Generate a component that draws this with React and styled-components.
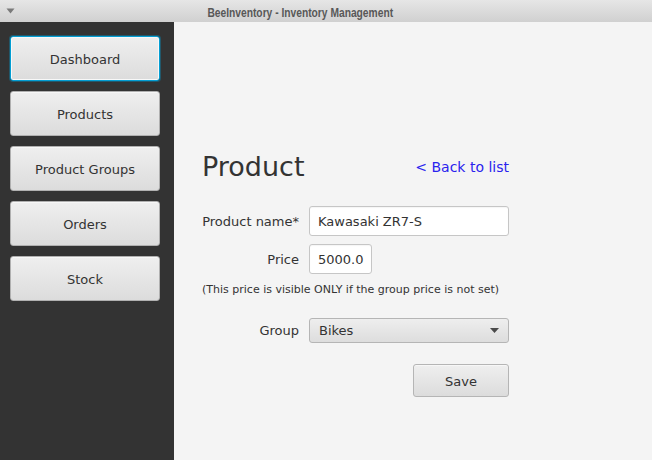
import React from 'react';
import styled, { createGlobalStyle } from 'styled-components';

const GlobalStyle = createGlobalStyle`
  html, body {
    margin: 0;
    padding: 0;
    background: #f4f4f4;
  }
  body {
    font-family: "DejaVu Sans", Verdana, sans-serif;
    color: #333;
  }
`;

const Window = styled.div`
  width: 652px;
  height: 460px;
  display: flex;
  flex-direction: column;
  overflow: hidden;
`;

const TitleBar = styled.div`
  height: 22px;
  flex: none;
  display: flex;
  align-items: center;
  padding: 0 66px 0 6px;
  background: linear-gradient(#e6e6e6, #d0d0d0);
  box-sizing: border-box;
`;

const MenuArrow = styled.svg`
  width: 9px;
  height: 6px;
  flex: none;
`;

const TitleSlot = styled.div`
  flex: 1;
  text-align: center;
`;

// the window manager font is a narrow bold face, squeeze a regular one to match
const WindowTitle = styled.span`
  display: inline-block;
  font-family: "Liberation Sans Narrow", "Liberation Sans", sans-serif;
  font-weight: 700;
  font-size: 12.5px;
  color: #585858;
  transform: scaleX(0.82);
`;

const Body = styled.div`
  flex: 1;
  display: flex;
`;

const Sidebar = styled.nav`
  width: 174px;
  flex: none;
  background: #333333;
  box-sizing: border-box;
  padding: 14px 0 0 10px;
  display: flex;
  flex-direction: column;
  gap: 10px;
`;

const NavButton = styled.button`
  width: 150px;
  height: 45px;
  box-sizing: border-box;
  border: 1px solid ${(p) => (p.$focused ? '#039ed3' : '#b0b0b0')};
  border-radius: 3px;
  background: linear-gradient(#efefef, #dcdcdc);
  box-shadow: ${(p) =>
    p.$focused ? '0 0 0 1px rgba(3, 158, 211, 0.35), inset 0 0 0 1px #f8f8f8' : 'inset 0 1px 0 #f7f7f7'};
  font-family: "DejaVu Sans", Verdana, sans-serif;
  font-size: 13px;
  color: #333;
  padding: 2px 0 0;
  cursor: pointer;
`;

const Main = styled.main`
  flex: 1;
  box-sizing: border-box;
  padding: 129px 0 0 28px;
`;

const Form = styled.div`
  width: 307px;
  display: flex;
  flex-direction: column;
`;

const Header = styled.div`
  display: flex;
  align-items: center;
  justify-content: space-between;
  margin-bottom: 23px;
`;

const Heading = styled.h1`
  margin: 0;
  font-size: 27px;
  line-height: 32px;
  font-weight: 400;
  color: #333;
`;

const BackLink = styled.a`
  font-size: 14px;
  line-height: 17px;
  color: #2a22ee;
  text-decoration: none;
  margin-top: 1px;
  cursor: pointer;
`;

const Row = styled.div`
  display: grid;
  grid-template-columns: 97px 200px;
  column-gap: 10px;
  align-items: center;
  margin-top: ${(p) => p.$top || 0}px;
`;

const Label = styled.label`
  font-size: 13px;
  line-height: 15px;
  text-align: right;
  white-space: nowrap;
  color: #333;
`;

const TextField = styled.div`
  width: ${(p) => p.$width || 200}px;
  height: 30px;
  box-sizing: border-box;
  border: 1px solid #c6c6c6;
  border-radius: 3px;
  background: #fff;
  box-shadow: inset 0 1px 1px rgba(0, 0, 0, 0.04);
  padding: 0 8px;
  display: flex;
  align-items: center;
  font-size: 13px;
  color: #333;
`;

const Note = styled.p`
  margin: 8px 0 0;
  font-size: 11px;
  line-height: 15px;
  color: #333;
  white-space: nowrap;
`;

const Combo = styled.div`
  width: 200px;
  height: 25px;
  box-sizing: border-box;
  border: 1px solid #b5b5b5;
  border-radius: 3px;
  background: linear-gradient(#eeeeee, #dddddd);
  display: flex;
  align-items: center;
  justify-content: space-between;
  padding: 0 9px 0 9px;
  font-size: 13px;
  color: #333;
`;

const Actions = styled.div`
  display: flex;
  justify-content: flex-end;
  margin-top: 21px;
`;

const SaveButton = styled.button`
  width: 96px;
  height: 33px;
  box-sizing: border-box;
  border: 1px solid #b5b5b5;
  border-radius: 3px;
  background: linear-gradient(#efefef, #dcdcdc);
  box-shadow: inset 0 1px 0 #f7f7f7;
  font-family: "DejaVu Sans", Verdana, sans-serif;
  font-size: 13px;
  color: #333;
  padding: 1px 0 0;
  cursor: pointer;
`;

const navItems = ['Dashboard', 'Products', 'Product Groups', 'Orders', 'Stock'];

export default function App() {
  return (
    <>
      <GlobalStyle />
      <Window>
        <TitleBar>
          <MenuArrow viewBox="0 0 9 6">
            <path d="M0.5 0.5 L8.5 0.5 L4.5 5.5 Z" fill="#7a7a7a" />
          </MenuArrow>
          <TitleSlot>
            <WindowTitle>BeeInventory - Inventory Management</WindowTitle>
          </TitleSlot>
        </TitleBar>
        <Body>
          <Sidebar>
            {navItems.map((item, i) => (
              <NavButton key={item} $focused={i === 0}>
                {item}
              </NavButton>
            ))}
          </Sidebar>
          <Main>
            <Form>
              <Header>
                <Heading>Product</Heading>
                <BackLink>&lt; Back to list</BackLink>
              </Header>
              <Row>
                <Label>Product name*</Label>
                <TextField>Kawasaki ZR7-S</TextField>
              </Row>
              <Row $top={8}>
                <Label>Price</Label>
                <TextField $width={63}>5000.0</TextField>
              </Row>
              <Note>(This price is visible ONLY if the group price is not set)</Note>
              <Row $top={21}>
                <Label>Group</Label>
                <Combo>
                  Bikes
                  <svg width="9" height="5" viewBox="0 0 9 5">
                    <path d="M0 0 L9 0 L4.5 5 Z" fill="#4a4a4a" />
                  </svg>
                </Combo>
              </Row>
              <Actions>
                <SaveButton>Save</SaveButton>
              </Actions>
            </Form>
          </Main>
        </Body>
      </Window>
    </>
  );
}
